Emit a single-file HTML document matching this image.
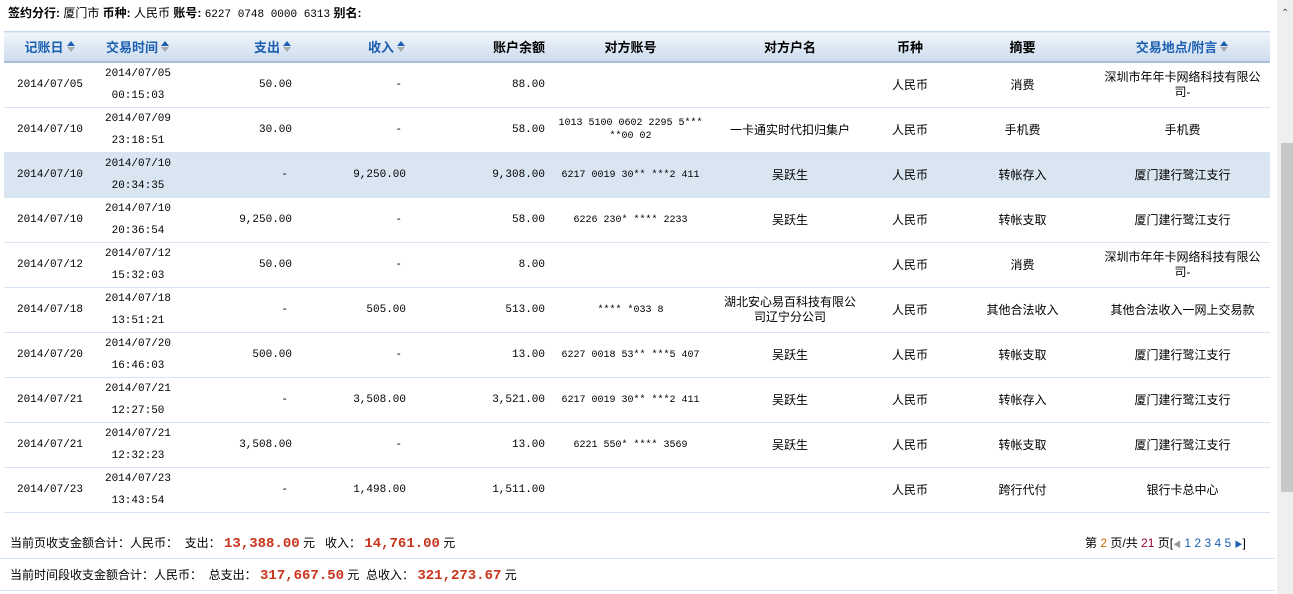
<!DOCTYPE html>
<html><head><meta charset="utf-8"><style>
body{margin:0;width:1293px;height:594px;overflow:hidden;background:#fff;font-family:"Liberation Sans","Noto Sans CJK SC",sans-serif;font-size:12px;color:#000;position:relative}
.top{position:absolute;left:8px;top:5px;font-size:12px;line-height:16px}
.top b{font-weight:bold}
.mono{font-family:"Liberation Mono","Noto Sans CJK SC",monospace;font-size:11px}
table{position:absolute;left:4px;top:31px;border-collapse:collapse;table-layout:fixed;width:1266px}
th{height:29px;background:linear-gradient(#f0f5fb,#cddcee);border-top:1px solid #c5d6ea;border-bottom:2px solid #aac0d8;font-weight:bold;font-size:13px;padding:0;color:#000}
th.s{color:#1b5fb0}
td{height:44px;border-bottom:1px solid #d6e3f3;padding:0;text-align:center;line-height:22px}
td.r{text-align:right;padding-right:6px}
td.ac{font-family:"Liberation Mono","Noto Sans CJK SC",monospace;font-size:10px;line-height:13px}
tr.hl td{background:#dae5f2}
.ar{display:inline-block;width:9px;height:12px;vertical-align:-1px;margin-left:3px;position:relative}
.ar:before{content:"";position:absolute;left:0;top:0;border-left:4.5px solid transparent;border-right:4.5px solid transparent;border-bottom:5px solid #1b5fb0}
.ar:after{content:"";position:absolute;left:0;top:6px;border-left:4.5px solid transparent;border-right:4.5px solid transparent;border-top:5px solid #aaa}
.ft{position:absolute;left:0;width:1275px;border-bottom:1px solid #d6e3f3}
.red{color:#c8341c;font-family:"Liberation Mono",monospace;font-weight:bold;font-size:14px}
.sb{position:absolute;left:1277px;top:0;width:16px;height:594px;background:#efefef}
.th{position:absolute;left:1281px;top:143px;width:12px;height:349px;background:#c8c8c8}
</style></head><body>
<div class="top"><b>签约分行:</b> 厦门市 <b>币种:</b> 人民币 <b>账号:</b> <span class="mono">6227 0748 0000 6313</span> <b>别名:</b></div>
<table>
<colgroup><col style="width:92px"><col style="width:84px"><col style="width:118px"><col style="width:114px"><col style="width:139px"><col style="width:159px"><col style="width:160px"><col style="width:80px"><col style="width:145px"><col style="width:175px"></colgroup>
<tr><th class="s">记账日<span class="ar"></span></th><th class="s">交易时间<span class="ar"></span></th><th class="s" style="text-align:right;padding-right:6px">支出<span class="ar"></span></th><th class="s" style="text-align:right;padding-right:6px">收入<span class="ar"></span></th><th style="text-align:right;padding-right:6px">账户余额</th><th>对方账号</th><th>对方户名</th><th>币种</th><th>摘要</th><th class="s">交易地点/附言<span class="ar"></span></th></tr>
<tr><td class="mono">2014/07/05</td><td class="mono">2014/07/05<br>00:15:03</td><td class="r mono">50.00</td><td class="r mono" style="padding-right:10px">-</td><td class="r mono">88.00</td><td class="ac"></td><td></td><td>人民币</td><td>消费</td><td style="line-height:15px">深圳市年年卡网络科技有限公<br>司-</td></tr>
<tr><td class="mono">2014/07/10</td><td class="mono">2014/07/09<br>23:18:51</td><td class="r mono">30.00</td><td class="r mono" style="padding-right:10px">-</td><td class="r mono">58.00</td><td class="ac">1013 5100 0602 2295 5***<br>**00 02</td><td>一卡通实时代扣归集户</td><td>人民币</td><td>手机费</td><td>手机费</td></tr>
<tr class="hl"><td class="mono">2014/07/10</td><td class="mono">2014/07/10<br>20:34:35</td><td class="r mono" style="padding-right:10px">-</td><td class="r mono">9,250.00</td><td class="r mono">9,308.00</td><td class="ac">6217 0019 30** ***2 411</td><td>吴跃生</td><td>人民币</td><td>转帐存入</td><td>厦门建行鹭江支行</td></tr>
<tr><td class="mono">2014/07/10</td><td class="mono">2014/07/10<br>20:36:54</td><td class="r mono">9,250.00</td><td class="r mono" style="padding-right:10px">-</td><td class="r mono">58.00</td><td class="ac">6226 230* **** 2233</td><td>吴跃生</td><td>人民币</td><td>转帐支取</td><td>厦门建行鹭江支行</td></tr>
<tr><td class="mono">2014/07/12</td><td class="mono">2014/07/12<br>15:32:03</td><td class="r mono">50.00</td><td class="r mono" style="padding-right:10px">-</td><td class="r mono">8.00</td><td class="ac"></td><td></td><td>人民币</td><td>消费</td><td style="line-height:15px">深圳市年年卡网络科技有限公<br>司-</td></tr>
<tr><td class="mono">2014/07/18</td><td class="mono">2014/07/18<br>13:51:21</td><td class="r mono" style="padding-right:10px">-</td><td class="r mono">505.00</td><td class="r mono">513.00</td><td class="ac">**** *033 8</td><td style="line-height:15px">湖北安心易百科技有限公<br>司辽宁分公司</td><td>人民币</td><td>其他合法收入</td><td>其他合法收入一网上交易款</td></tr>
<tr><td class="mono">2014/07/20</td><td class="mono">2014/07/20<br>16:46:03</td><td class="r mono">500.00</td><td class="r mono" style="padding-right:10px">-</td><td class="r mono">13.00</td><td class="ac">6227 0018 53** ***5 407</td><td>吴跃生</td><td>人民币</td><td>转帐支取</td><td>厦门建行鹭江支行</td></tr>
<tr><td class="mono">2014/07/21</td><td class="mono">2014/07/21<br>12:27:50</td><td class="r mono" style="padding-right:10px">-</td><td class="r mono">3,508.00</td><td class="r mono">3,521.00</td><td class="ac">6217 0019 30** ***2 411</td><td>吴跃生</td><td>人民币</td><td>转帐存入</td><td>厦门建行鹭江支行</td></tr>
<tr><td class="mono">2014/07/21</td><td class="mono">2014/07/21<br>12:32:23</td><td class="r mono">3,508.00</td><td class="r mono" style="padding-right:10px">-</td><td class="r mono">13.00</td><td class="ac">6221 550* **** 3569</td><td>吴跃生</td><td>人民币</td><td>转帐支取</td><td>厦门建行鹭江支行</td></tr>
<tr><td class="mono">2014/07/23</td><td class="mono">2014/07/23<br>13:43:54</td><td class="r mono" style="padding-right:10px">-</td><td class="r mono">1,498.00</td><td class="r mono">1,511.00</td><td class="ac"></td><td></td><td>人民币</td><td>跨行代付</td><td>银行卡总中心</td></tr>
</table>
<div class="ft" style="top:512px;height:46px"></div>
<div style="position:absolute;left:10px;top:534px;line-height:18px">当前页收支金额合计：人民币： &nbsp;支出： <span class="red">13,388.00</span> 元 &nbsp; 收入： <span class="red">14,761.00</span> 元</div>
<div style="position:absolute;left:1085px;top:535px;line-height:16px">第 <span style="color:#c60">2</span> 页/共 <span style="color:#903">21</span> 页[<span style="color:#999;font-size:8px">◀</span> <span style="color:#1b5fb0">1 2 3 4 5</span> <span style="color:#1b5fb0;font-size:8px">▶</span>]</div>
<div class="ft" style="top:559px;height:31px"></div>
<div style="position:absolute;left:10px;top:566px;line-height:18px">当前时间段收支金额合计：人民币： &nbsp;总支出： <span class="red">317,667.50</span> 元 &nbsp;总收入： <span class="red">321,273.67</span> 元</div>
<div class="sb"></div><div class="th"></div>
<div style="position:absolute;left:1281px;top:8px;font-size:10px;color:#555">⌃</div>
</body></html>
